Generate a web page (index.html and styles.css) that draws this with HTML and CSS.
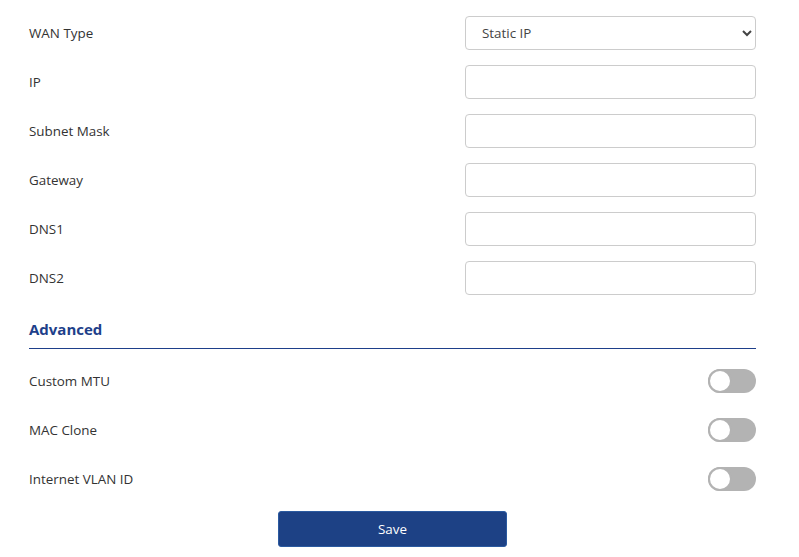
FILE: index.html
```html
<!DOCTYPE html>
<html>
<head>
<meta charset="utf-8">
<link rel="stylesheet" href="styles.css">
</head>
<body>
<div class="page">
  <div class="row">
    <label class="label">WAN Type</label>
    <select class="field select">
      <option>Static IP</option>
    </select>
  </div>
  <div class="row">
    <label class="label">IP</label>
    <input class="field" type="text">
  </div>
  <div class="row">
    <label class="label">Subnet Mask</label>
    <input class="field" type="text">
  </div>
  <div class="row">
    <label class="label">Gateway</label>
    <input class="field" type="text">
  </div>
  <div class="row">
    <label class="label">DNS1</label>
    <input class="field" type="text">
  </div>
  <div class="row">
    <label class="label">DNS2</label>
    <input class="field" type="text">
  </div>

  <div class="section">Advanced</div>

  <div class="row">
    <span class="label">Custom MTU</span>
    <span class="toggle"><span class="knob"></span></span>
  </div>
  <div class="row">
    <span class="label">MAC Clone</span>
    <span class="toggle"><span class="knob"></span></span>
  </div>
  <div class="row">
    <span class="label">Internet VLAN ID</span>
    <span class="toggle"><span class="knob"></span></span>
  </div>

  <div class="actions">
    <button class="save">Save</button>
  </div>
</div>
</body>
</html>
```

FILE: styles.css
```css
html, body {
  margin: 0;
  padding: 0;
  background: #fff;
}
body {
  font-family: "Open Sans", "Noto Sans", sans-serif;
  font-size: 13.4px;
  color: #333;
}
.page {
  padding: 16px 43px 0 29px;
}
.row {
  display: flex;
  align-items: center;
  justify-content: space-between;
  height: 34px;
  margin-bottom: 15px;
}
.label {
  font-size: 13.4px;
  color: #333;
}
.field {
  box-sizing: border-box;
  width: 291px;
  height: 34px;
  border: 1px solid #ccc;
  border-radius: 4px;
  background: #fff;
  font-family: inherit;
  font-size: 13.4px;
  color: #444;
  padding: 0 14px;
  outline: none;
}
.select {
  padding-left: 12px;
}
.section {
  margin-top: 24px;
  margin-bottom: 15px;
  padding-bottom: 9px;
  border-bottom: 1px solid #1e3f8a;
  font-size: 15px;
  line-height: 20px;
  font-weight: bold;
  color: #1e3f8a;
}
.toggle {
  position: relative;
  box-sizing: border-box;
  width: 48px;
  height: 24px;
  border-radius: 12px;
  background: #b3b3b3;
}
.knob {
  position: absolute;
  left: 0;
  top: 0;
  box-sizing: border-box;
  width: 24px;
  height: 24px;
  border-radius: 50%;
  background: #fff;
  border: 2px solid #b3b3b3;
}
.actions {
  display: flex;
  justify-content: center;
}
.save {
  width: 229px;
  height: 36px;
  background: #1d4185;
  border: 1px solid #2b5aa0;
  border-radius: 3px;
  color: #fff;
  font-family: inherit;
  font-size: 13.4px;
}
```
